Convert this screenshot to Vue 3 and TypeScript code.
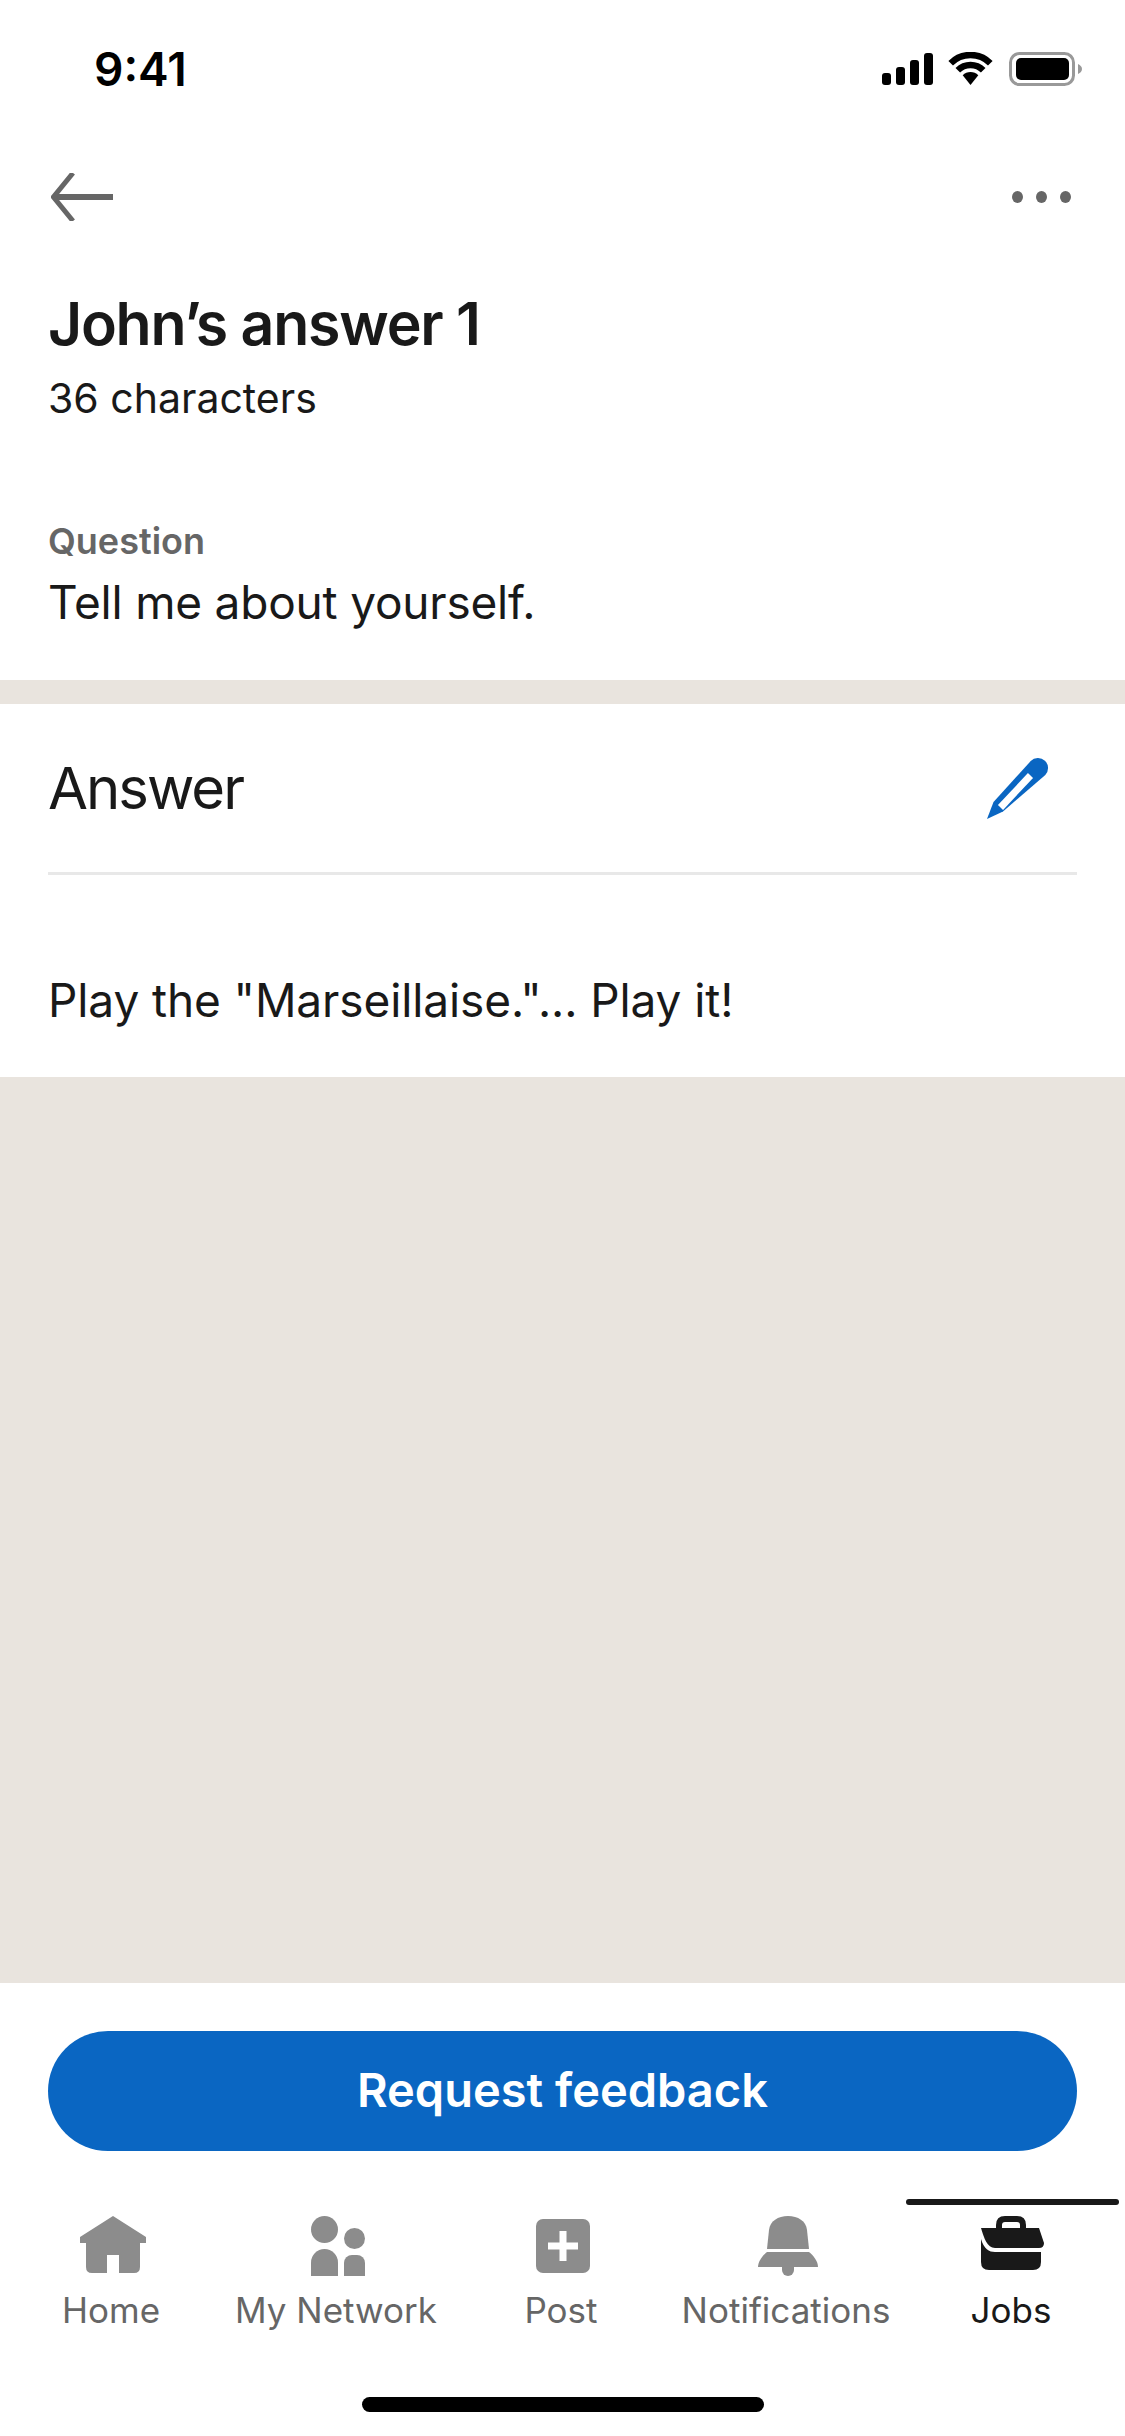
<template>
  <div class="screen">
    <header class="status-bar">
      <span class="time">9:41</span>
      <div class="status-icons">
        <svg class="signal" viewBox="0 0 51 32" fill="#000">
          <rect x="0" y="20" width="9" height="12" rx="3" />
          <rect x="14" y="14" width="9" height="18" rx="3" />
          <rect x="28" y="7" width="9" height="25" rx="3" />
          <rect x="42" y="0" width="9" height="32" rx="3" />
        </svg>
        <svg class="wifi" viewBox="0 0 45 33" fill="none">
          <path d="M2.7 11.2A28 28 0 0 1 42.3 11.2" stroke="#000" stroke-width="6.5" />
          <path d="M9.8 18.3A18 18 0 0 1 35.2 18.3" stroke="#000" stroke-width="6.5" />
          <path d="M22.5 33L14.7 23.2A11 11 0 0 1 30.3 23.2Z" fill="#000" />
        </svg>
        <svg class="battery" viewBox="0 0 73 34" fill="none">
          <rect x="1.5" y="1.5" width="63" height="31" rx="9" stroke="#999" stroke-width="3" />
          <rect x="7" y="6" width="53" height="22" rx="5" fill="#000" />
          <path d="M69 12C71.5 13 73 15 73 17C73 19 71.5 21 69 22Z" fill="#999" />
        </svg>
      </div>
    </header>

    <nav class="top-nav">
      <svg class="back" viewBox="0 0 62 48" fill="none" stroke="#666">
        <path d="M3 24H62" stroke-width="6" />
        <path d="M22 0L2.5 24L22 48" stroke-width="5" />
      </svg>
      <div class="more">
        <span></span><span></span><span></span>
      </div>
    </nav>

    <section class="intro">
      <h1>John’s answer 1</h1>
      <p class="count">36 characters</p>
      <div class="label">Question</div>
      <p class="question">Tell me about yourself.</p>
    </section>

    <section class="answer">
      <div class="answer-head">
        <h2>Answer</h2>
        <svg class="pen" viewBox="0 0 70 75">
          <path d="M7 67L13.5 50L50.7 9.1A10 10 0 0 1 65.3 22.9L23 59.5Z" fill="#0a66c2" />
          <path d="M20.5 55.5L50.5 23.5" stroke="#fff" stroke-width="7" />
        </svg>
      </div>
      <p class="answer-text">Play the "Marseillaise."... Play it!</p>
    </section>

    <div class="filler"></div>

    <footer class="footer">
      <button class="request">Request feedback</button>
      <div class="tabs">
        <div v-for="tab in tabs" :key="tab.name" class="tab" :class="{ active: tab.active }">
          <div class="tab-mark"></div>
          <div class="tab-icon">
            <svg v-if="tab.name === 'Home'" width="66" height="57" viewBox="0 0 66 57" fill="#8c8c8c">
              <path d="M33 0L66 21V27H60V51Q60 57 54 57H39V39H27V57H12Q6 57 6 51V27H0V21Z" />
            </svg>
            <svg v-else-if="tab.name === 'My Network'" width="54" height="60" viewBox="0 0 54 60" fill="#8c8c8c">
              <circle cx="13.5" cy="13.5" r="13.5" />
              <circle cx="43.5" cy="22.5" r="10.5" />
              <path d="M0 60V46.5A13.5 13.5 0 0 1 27 46.5V60Z" />
              <path d="M33 60V47A8 8 0 0 1 41 39H46A8 8 0 0 1 54 47V60Z" />
            </svg>
            <svg v-else-if="tab.name === 'Post'" class="post-icon" width="54" height="54" viewBox="0 0 54 54">
              <rect width="54" height="54" rx="7" fill="#8c8c8c" />
              <path d="M23.5 12H30.5V23.5H42V30.5H30.5V42H23.5V30.5H12V23.5H23.5Z" fill="#fff" />
            </svg>
            <svg v-else-if="tab.name === 'Notifications'" width="60" height="60" viewBox="0 0 60 60" fill="#8c8c8c">
              <path d="M9 33L11 14C12 5 20 0 30 0C40 0 48 5 49 14L51 33Z" />
              <path d="M9 36H51C55 39 60 45 60 51H0C0 45 5 39 9 36Z" />
              <path d="M24 51H36V54A6 6 0 0 1 24 54Z" />
            </svg>
            <svg v-else width="63" height="54" viewBox="0 0 63 54" fill="#191919">
              <path d="M15 12V9Q15 0 24 0H36Q45 0 45 9V12H39V9Q39 6 36 6H24Q21 6 21 9V12Z" />
              <path d="M0 12H58L63 27Q63 32 58 32H14C6 32 3 22 0 12Z" />
              <path d="M0 23C3 33 8 36 14 36H60V46Q60 54 52 54H8Q0 54 0 46Z" />
            </svg>
          </div>
          <span class="tab-label">{{ tab.name }}</span>
        </div>
      </div>
      <div class="home-indicator"></div>
    </footer>
  </div>
</template>

<script setup lang="ts">
interface Tab {
  name: string
  active?: boolean
}

const tabs: Tab[] = [
  { name: 'Home' },
  { name: 'My Network' },
  { name: 'Post' },
  { name: 'Notifications' },
  { name: 'Jobs', active: true },
]
</script>

<style>
html,
body {
  margin: 0;
  background: #fff;
}
</style>

<style scoped>
* {
  box-sizing: border-box;
}

.screen {
  width: 1125px;
  height: 2436px;
  display: flex;
  flex-direction: column;
  background: #e9e4de;
  color: #191919;
  font-family: Inter, 'Liberation Sans', sans-serif;
  overflow: hidden;
}

.status-bar {
  height: 140px;
  background: #fff;
  padding: 52px 43px 0 94px;
  display: flex;
  justify-content: space-between;
  align-items: flex-start;
}

.time {
  font-size: 46px;
  font-weight: 600;
  line-height: 34px;
  color: #000;
}

.status-icons {
  display: flex;
  align-items: flex-start;
}

.signal {
  width: 51px;
  height: 32px;
  margin-top: 1px;
}

.wifi {
  width: 45px;
  height: 33px;
  margin-left: 15px;
}

.battery {
  width: 73px;
  height: 34px;
  margin-left: 16px;
}

.top-nav {
  height: 96px;
  background: #fff;
  padding: 33px 54px 0 51px;
  display: flex;
  justify-content: space-between;
  align-items: flex-start;
}

.back {
  width: 62px;
  height: 48px;
}

.more {
  display: flex;
  gap: 13px;
  margin-top: 18px;
}

.more span {
  width: 11px;
  height: 12px;
  border-radius: 50%;
  background: #666;
}

.intro {
  background: #fff;
  padding: 53px 48px 0;
  height: 444px;
}

h1 {
  margin: 0;
  font-size: 59px;
  font-weight: 600;
  line-height: 70px;
  letter-spacing: -1.25px;
}

.count {
  margin: 13px 0 0;
  font-size: 41px;
  line-height: 52px;
}

.label {
  margin-top: 95px;
  font-size: 36px;
  font-weight: 600;
  line-height: 44px;
  color: #666;
}

.question {
  margin: 11px 0 0;
  font-size: 46px;
  line-height: 56px;
  letter-spacing: -0.2px;
}

.answer {
  margin-top: 24px;
  background: #fff;
  height: 373px;
  padding: 0 48px;
}

.answer-head {
  height: 171px;
  border-bottom: 3px solid #e8e8e8;
  display: flex;
  justify-content: space-between;
  padding-top: 49px;
}

h2 {
  margin: 0;
  font-size: 58px;
  font-weight: 400;
  line-height: 70px;
  letter-spacing: -2px;
}

.pen {
  width: 70px;
  height: 75px;
  margin: -1px 27px 0 0;
}

.answer-text {
  margin: 97px 0 0;
  font-size: 46px;
  line-height: 56px;
  letter-spacing: -0.1px;
}

.filler {
  flex: 1;
}

.footer {
  height: 453px;
  background: #fff;
  padding-top: 48px;
}

.request {
  display: block;
  width: 1029px;
  height: 120px;
  margin: 0 48px;
  padding: 0 0 3px;
  border: none;
  border-radius: 60px;
  background: #0a66c2;
  color: #fff;
  font-family: inherit;
  font-size: 47px;
  font-weight: 600;
}

.tabs {
  margin-top: 48px;
  display: grid;
  grid-template-columns: repeat(5, 1fr);
}

.tab {
  display: flex;
  flex-direction: column;
  align-items: center;
  color: #666;
}

.tab.active {
  color: #191919;
}

.tab-mark {
  width: 213px;
  height: 6px;
  border-radius: 3px;
}

.tab.active .tab-mark {
  background: #191919;
}

.tab-icon {
  height: 60px;
  margin-top: 11px;
}

.tab-icon svg {
  display: block;
}

.post-icon {
  margin-top: 3px;
}

.tab-label {
  margin: 12px 3px 0 0;
  font-size: 35px;
  line-height: 44px;
}

.home-indicator {
  width: 402px;
  height: 15px;
  margin: 65px auto 0;
  border-radius: 8px;
  background: #000;
}
</style>
